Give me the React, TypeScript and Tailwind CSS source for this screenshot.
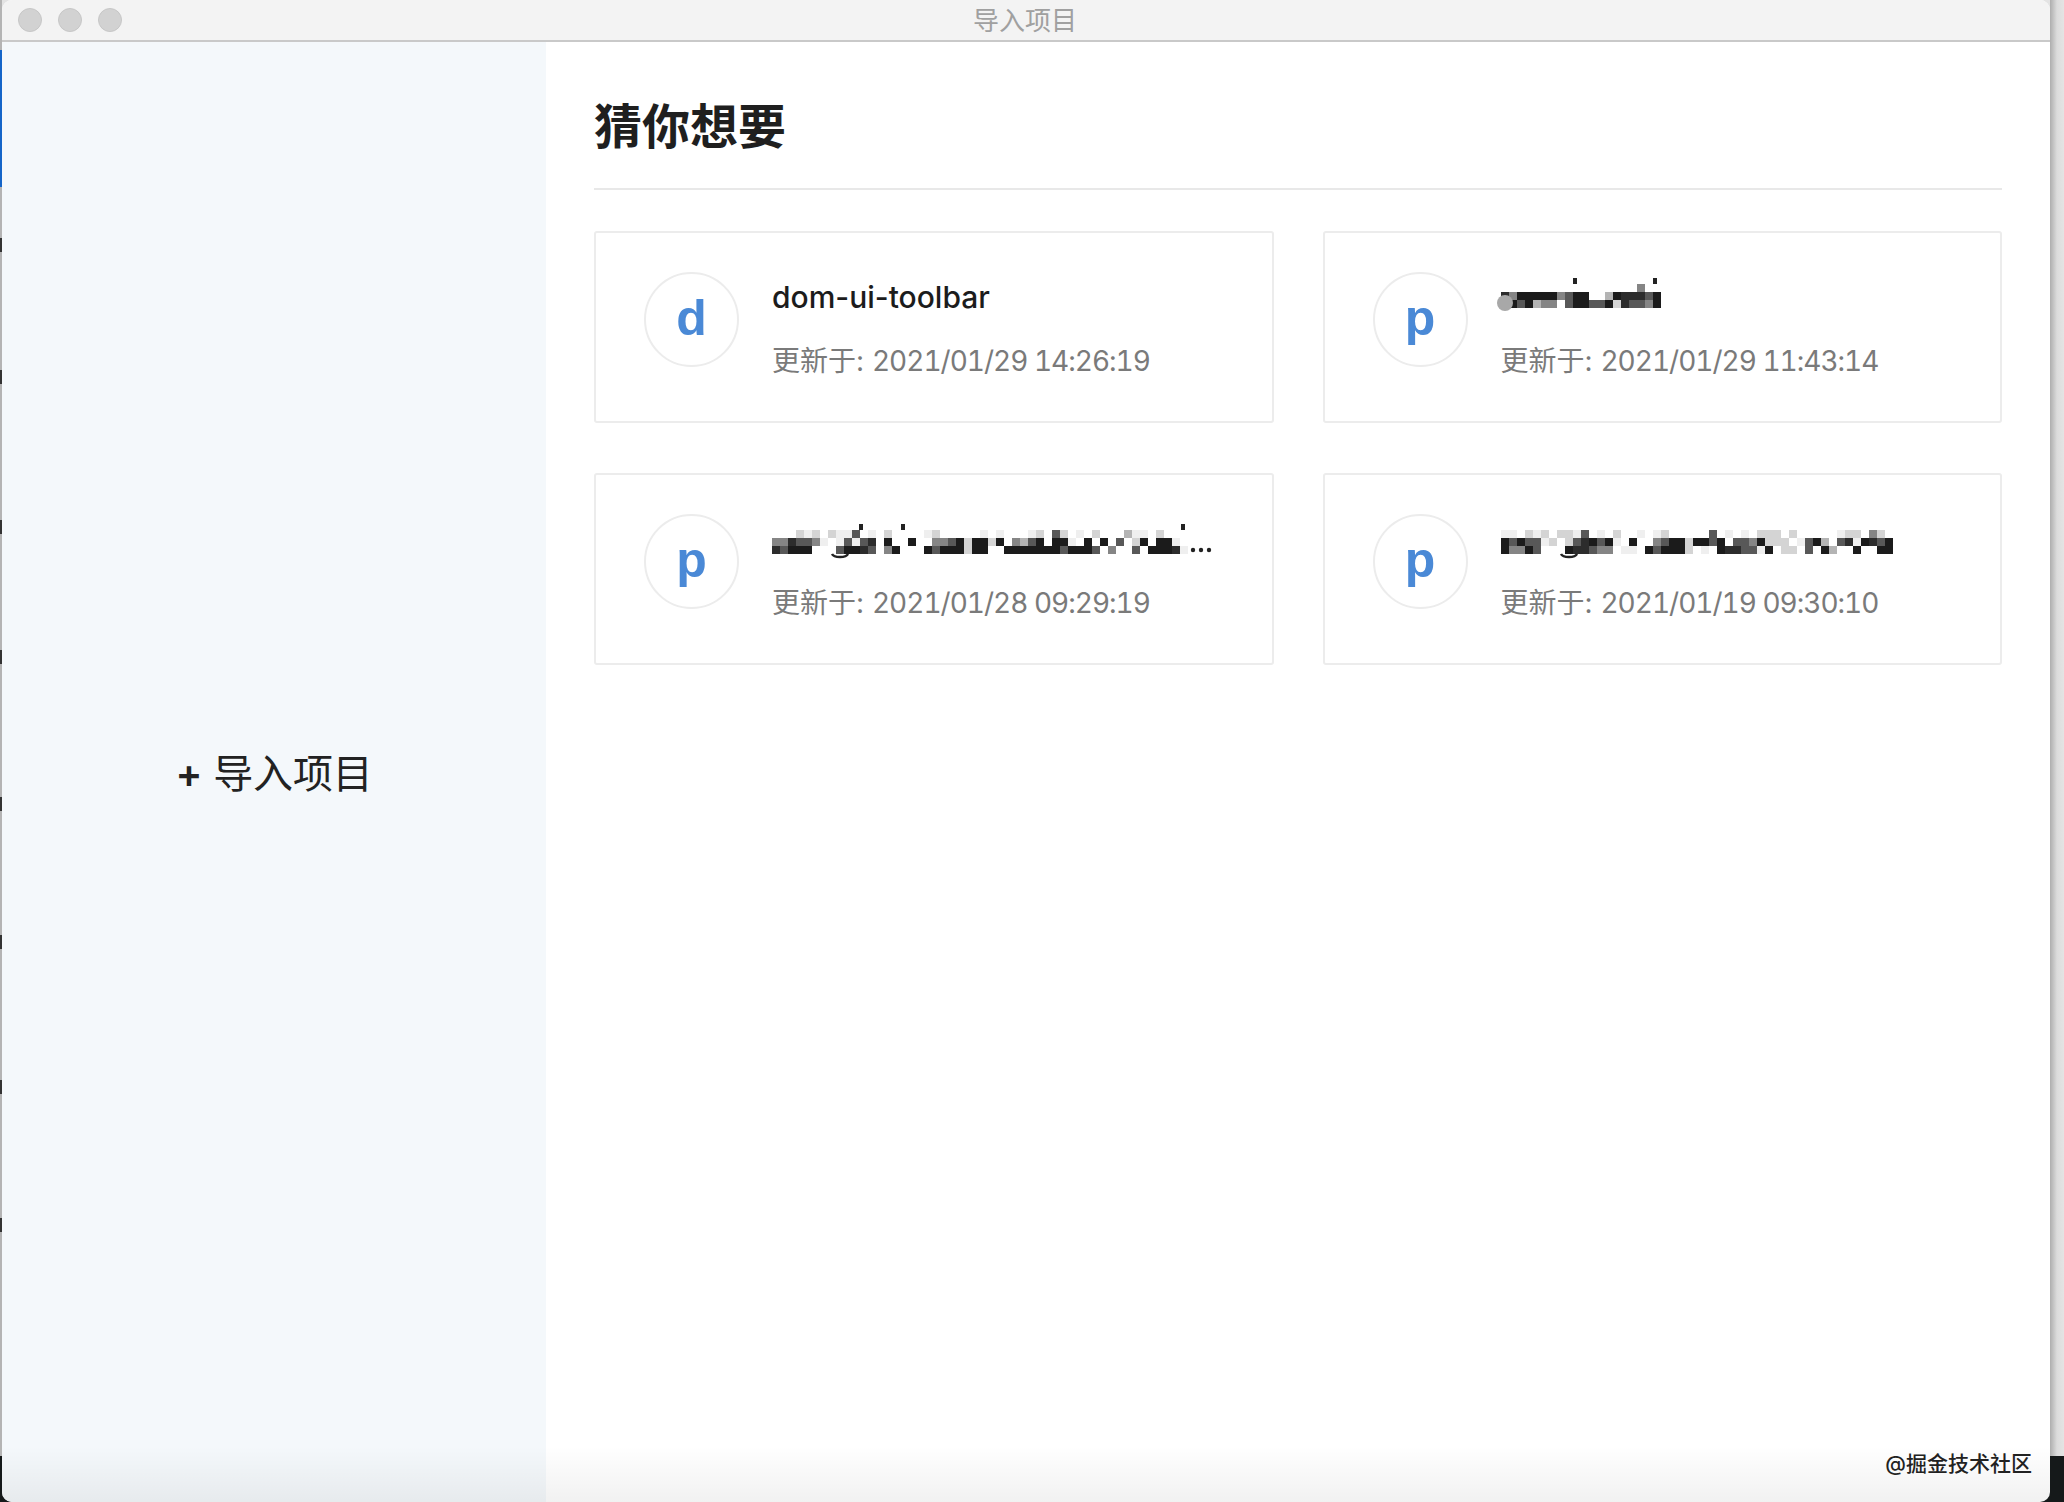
const SHADES: Record<string, string> = {
  "0": "#1b1b1b",
  "1": "#2c2c2c",
  "3": "#585858",
  "5": "#858585",
  "7": "#b4b4b4",
  "8": "#d4d4d4",
  "9": "#efefef",
};

type MosaicProps = {
  rows: string[];
  width: number;
  dots?: boolean;
  blob?: boolean;
  curve?: boolean;
  ticks?: number[];
};

function Mosaic({ rows, width, dots, blob, curve, ticks }: MosaicProps) {
  return (
    <svg width={width} height={36} viewBox={`0 0 ${width} 36`} className="block overflow-visible" aria-hidden="true">
      {ticks?.map((x) => <rect key={x} x={x} y={2} width={4} height={6} fill="#222" />)}
      {rows.map((row, y) =>
        row.split("").map((c, x) =>
          SHADES[c] ? <rect key={`${x}-${y}`} x={x * 8} y={8 + y * 8} width={8} height={8} fill={SHADES[c]} /> : null,
        ),
      )}
      {blob && <ellipse cx={4} cy={27} rx={8} ry={8} fill="#a8a8a8" />}
      {curve && <path d="M60 32c2 4 14 4 16 0" fill="none" stroke="#222" strokeWidth={2.5} />}
      {dots && (
        <>
          <circle cx={421} cy={28} r={2.2} fill="#222" />
          <circle cx={429} cy={28} r={2.2} fill="#222" />
          <circle cx={437} cy={28} r={2.2} fill="#222" />
        </>
      )}
    </svg>
  );
}

const rowsCard3 = [
  "...898.8993.9.8....98.....9.9...98.38.9.8...799.8..",
  "5513359.93931.0..0..553080080.5730.009.0.0.3.80.009",
  "13000...30013.50...03000800..000000030003.5..3.00019",
];
const rowsCard4 = [
  "99.898.8893.9.8..9.98.....3.9.9.888.8.....988.58.",
  "0303398.8310309.0..530080030.3350888.9307.3190130",
  "05503...011355.99.030008.9.0113390.88.3.07..0..00",
];
const rowsCard2 = [
  ".................5..",
  "15000005300..7011130",
  "7030755.300330813350",
];

type Project = {
  letter: string;
  name?: string;
  date: string;
  mosaic?: string[];
  width?: number;
  dots?: boolean;
  blob?: boolean;
  curve?: boolean;
  ticks?: number[];
  shift?: string;
};

const projects: Project[] = [
  { letter: "d", name: "dom-ui-toolbar", date: "2021/01/29 14:26:19" },
  { letter: "p", mosaic: rowsCard2, width: 160, blob: true, ticks: [72, 152], shift: "pb-[6px]", date: "2021/01/29 11:43:14" },
  { letter: "p", mosaic: rowsCard3, width: 444, dots: true, curve: true, ticks: [87, 129, 409], shift: "pt-[2px]", date: "2021/01/28 09:29:19" },
  { letter: "p", mosaic: rowsCard4, width: 394, curve: true, shift: "pt-[2px]", date: "2021/01/19 09:30:10" },
];

function Card({ p }: { p: Project }) {
  return (
    <div className="h-[192px] border-2 border-[#ececec] rounded-[3px] bg-white pl-[48px] pt-[39px] flex gap-[33px]">
      <div className="w-[95px] h-[95px] rounded-full border-2 border-[#ececec] flex items-center justify-center font-['Liberation_Sans',sans-serif] font-bold text-[50px] leading-none text-[#4a89d6] pb-[4px]">
        {p.letter}
      </div>
      <div className="flex flex-col min-w-0 flex-1">
        <div className="h-[44px] mt-[3px] flex items-center">
          {p.mosaic ? (
            <div className={p.shift}>
              <Mosaic rows={p.mosaic} width={p.width!} dots={p.dots} blob={p.blob} curve={p.curve} ticks={p.ticks} />
            </div>
          ) : (
            <span className="text-[30px] leading-none font-medium text-[#1c1c1c]">{p.name}</span>
          )}
        </div>
        <div className="mt-[22px] text-[28px] leading-[40px] text-[#7a7a7a]">
          更新于: <span className="tabular-nums tracking-[-1px]">{p.date}</span>
        </div>
      </div>
    </div>
  );
}

const specks = [238, 370, 520, 650, 797, 935, 1080, 1218];

export default function App() {
  return (
    <div className="w-[2064px] h-[1502px] flex overflow-hidden bg-[linear-gradient(to_bottom,#e3e3e3_1456px,#15191a_1456px)] font-[Inter,'Noto_Sans_CJK_SC',sans-serif]">
      {/* desktop showing at the left of the window */}
      <div className="w-[2px] relative flex flex-col bg-[#b4b4b4]">
        <div className="h-[50px]" />
        <div className="h-[137px] bg-[#1565c8]" />
        <div className="flex-1" />
        <div className="h-[46px] bg-[#15191a]" />
        {specks.map((y) => (
          <div key={y} className="absolute left-0 w-[2px] h-[14px] bg-[#333333]" style={{ top: y }} />
        ))}
      </div>

      {/* app window */}
      <div className="w-[2048px] relative flex flex-col rounded-t-[10px] rounded-b-[10px] overflow-hidden bg-white">
        <div className="h-[42px] shrink-0 relative flex items-center justify-center bg-[#f3f3f3] border-b-2 border-[#c9c9c9]">
          <div className="absolute left-[16px] top-[8px] flex gap-[16px]">
            <div className="w-[24px] h-[24px] rounded-full bg-[#d2d2d2] border border-[#c6c6c6]" />
            <div className="w-[24px] h-[24px] rounded-full bg-[#d2d2d2] border border-[#c6c6c6]" />
            <div className="w-[24px] h-[24px] rounded-full bg-[#d2d2d2] border border-[#c6c6c6]" />
          </div>
          <span className="text-[26px] leading-none text-[#a0a0a0] pr-[2px] pt-[1px]">导入项目</span>
        </div>

        <div className="flex-1 flex min-h-0">
          <aside className="w-[544px] shrink-0 bg-[#f4f8fb] flex items-center justify-center pt-[4px]">
            <span className="text-[40px] leading-none text-[#222222] tracking-[-0.2px]">
              <span className="font-semibold">+</span> 导入项目
            </span>
          </aside>

          <main className="flex-1 px-[48px]">
            <div className="h-[148px] border-b-2 border-[#e8e8e8] pt-[49px]">
              <h1 className="text-[48px] leading-[72px] font-bold text-[#1f1f1f]">猜你想要</h1>
            </div>
            <div className="mt-[41px] grid grid-cols-2 gap-x-[49px] gap-y-[50px]">
              {projects.map((p) => (
                <Card key={p.date} p={p} />
              ))}
            </div>
          </main>
        </div>

        {/* faint shade along the bottom edge, and the site's watermark */}
        <div className="absolute left-0 right-0 bottom-0 h-[56px] bg-gradient-to-b from-transparent to-[#0000000e] pointer-events-none" />
        <div className="absolute right-[18px] bottom-[28px] text-[21px] leading-none text-[#222] font-medium [text-shadow:0_0_2px_#ffffff]">
          @掘金技术社区
        </div>
      </div>

      {/* desktop showing at the right of the window */}
      <div className="w-[14px] flex flex-col bg-gradient-to-r from-[#aeaeae] via-[#dcdcdc] to-[#e4e4e4]">
        <div className="flex-1" />
        <div className="h-[46px] bg-[#15191a]" />
      </div>
    </div>
  );
}
